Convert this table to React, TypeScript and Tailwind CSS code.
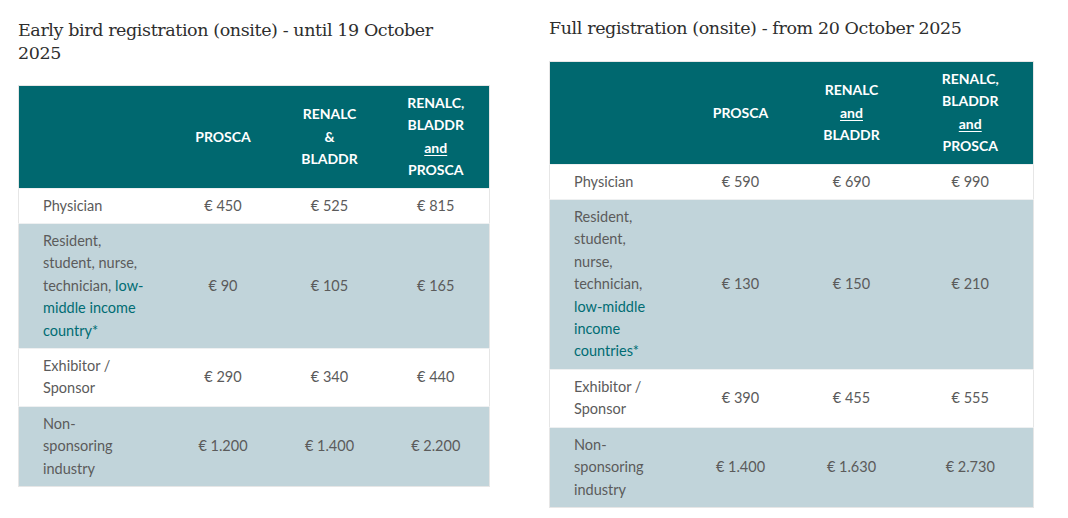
import React from "react";

type Row = { label: React.ReactNode; values: string[]; stripe: boolean };

const link = "text-[#006c73]";

const leftRows: Row[] = [
  { label: "Physician", values: ["€ 450", "€ 525", "€ 815"], stripe: false },
  {
    label: (
      <>
        Resident,
        <br />
        student, nurse,
        <br />
        technician, <span className={link}>low-</span>
        <br />
        <span className={link}>middle income</span>
        <br />
        <span className={link}>country*</span>
      </>
    ),
    values: ["€ 90", "€ 105", "€ 165"],
    stripe: true,
  },
  {
    label: (
      <>
        Exhibitor /<br />
        Sponsor
      </>
    ),
    values: ["€ 290", "€ 340", "€ 440"],
    stripe: false,
  },
  {
    label: (
      <>
        Non-
        <br />
        sponsoring
        <br />
        industry
      </>
    ),
    values: ["€ 1.200", "€ 1.400", "€ 2.200"],
    stripe: true,
  },
];

const rightRows: Row[] = [
  { label: "Physician", values: ["€ 590", "€ 690", "€ 990"], stripe: false },
  {
    label: (
      <>
        Resident,
        <br />
        student,
        <br />
        nurse,
        <br />
        technician,
        <br />
        <span className={link}>low-middle</span>
        <br />
        <span className={link}>income</span>
        <br />
        <span className={link}>countries*</span>
      </>
    ),
    values: ["€ 130", "€ 150", "€ 210"],
    stripe: true,
  },
  {
    label: (
      <>
        Exhibitor /<br />
        Sponsor
      </>
    ),
    values: ["€ 390", "€ 455", "€ 555"],
    stripe: false,
  },
  {
    label: (
      <>
        Non-
        <br />
        sponsoring
        <br />
        industry
      </>
    ),
    values: ["€ 1.400", "€ 1.630", "€ 2.730"],
    stripe: true,
  },
];

function PriceTable({
  widths,
  headers,
  rows,
}: {
  widths: number[];
  headers: React.ReactNode[];
  rows: Row[];
}) {
  const total = widths.reduce((a, b) => a + b, 0);
  return (
    <table
      className="table-fixed border-collapse border border-[#e6e6e6] text-[14.5px] leading-[22.4px] text-[#5b5b5b]"
      style={{ width: total }}
    >
      <colgroup>
        {widths.map((w, i) => (
          <col key={i} style={{ width: w }} />
        ))}
      </colgroup>
      <thead>
        <tr className="bg-[#00686f]">
          <th className="py-[6px]" />
          {headers.map((h, i) => (
            <th key={i} className="px-2 py-[6px] text-center text-[14px] font-bold text-white">
              {h}
            </th>
          ))}
        </tr>
      </thead>
      <tbody>
        {rows.map((r, i) => (
          <tr
            key={i}
            className={`${r.stripe ? "bg-[#c1d4da]" : "bg-white"} border-t border-[#eef0f1]`}
          >
            <td className="py-[6px] pl-6 pr-2 align-middle whitespace-nowrap">{r.label}</td>
            {r.values.map((v, j) => (
              <td key={j} className="py-[6px] text-center align-middle">
                {v}
              </td>
            ))}
          </tr>
        ))}
      </tbody>
    </table>
  );
}

const U = ({ children }: { children: React.ReactNode }) => (
  <span className="underline underline-offset-2">{children}</span>
);

export default function App() {
  return (
    <div
      className="flex w-[1068px] h-[518px] bg-white pl-[18px] pt-[19px]"
      style={{ fontFamily: "Lato, 'Open Sans', sans-serif" }}
    >
      <div className="w-[471px]">
        <h2
          className="w-[440px] text-[17.5px] leading-[23px] text-[#2e2e2e] font-normal"
          style={{ fontFamily: "'DejaVu Serif', 'Liberation Serif', serif", letterSpacing: "-0.4px" }}
        >
          Early bird registration (onsite) - until 19 October
          <br />
          2025
        </h2>
        <div className="mt-[20px]">
          <PriceTable
            widths={[151, 107, 106, 107]}
            headers={[
              "PROSCA",
              <>
                RENALC
                <br />&amp;
                <br />
                BLADDR
              </>,
              <>
                RENALC,
                <br />
                BLADDR
                <br />
                <U>and</U>
                <br />
                PROSCA
              </>,
            ]}
            rows={leftRows}
          />
        </div>
      </div>
      <div className="ml-[60px] w-[484px]">
        <h2
          className="text-[17.5px] leading-[23px] text-[#2e2e2e] font-normal -mt-[2px]"
          style={{ fontFamily: "'DejaVu Serif', 'Liberation Serif', serif", letterSpacing: "-0.4px" }}
        >
          Full registration (onsite) - from 20 October 2025
        </h2>
        <div className="mt-[21px]">
          <PriceTable
            widths={[136, 110, 112, 126]}
            headers={[
              "PROSCA",
              <>
                RENALC
                <br />
                <U>and</U>
                <br />
                BLADDR
              </>,
              <>
                RENALC,
                <br />
                BLADDR
                <br />
                <U>and</U>
                <br />
                PROSCA
              </>,
            ]}
            rows={rightRows}
          />
        </div>
      </div>
    </div>
  );
}
